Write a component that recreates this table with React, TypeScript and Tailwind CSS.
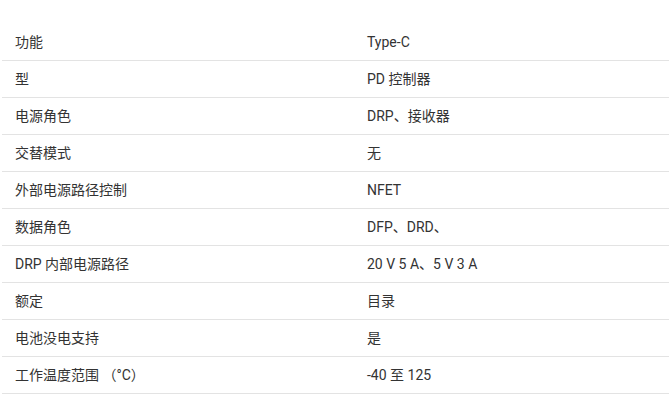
import React from 'react';

const rows: [string, string][] = [
  ['功能', 'Type-C'],
  ['型', 'PD 控制器'],
  ['电源角色', 'DRP、接收器'],
  ['交替模式', '无'],
  ['外部电源路径控制', 'NFET'],
  ['数据角色', 'DFP、DRD、'],
  ['DRP 内部电源路径', '20 V 5 A、5 V 3 A'],
  ['额定', '目录'],
  ['电池没电支持', '是'],
  ['工作温度范围 （°C）', '-40 至 125'],
];

const App: React.FC = () => {
  return (
    <div
      className="min-h-[395px] w-[671px] bg-white pt-[24px] text-[14px] text-[#333333]"
      style={{ fontFamily: 'Roboto, "Noto Sans CJK SC", sans-serif' }}
    >
      <div className="ml-[2px] w-[667px]">
        {rows.map(([label, value], i) => (
          <div key={i} className="flex h-[37px] items-center border-b border-[#e3e3e3]">
            <div className="w-[352px] pl-[13px]">{label}</div>
            <div className="flex-1 pl-[13px]">{value}</div>
          </div>
        ))}
      </div>
    </div>
  );
};

export default App;
